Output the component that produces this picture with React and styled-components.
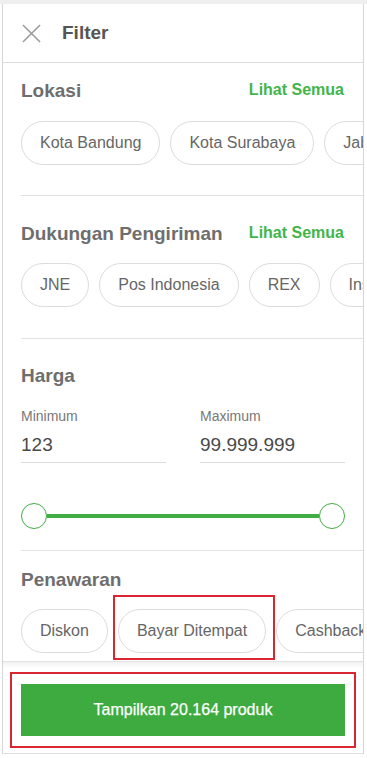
import React from 'react';
import styled, {createGlobalStyle} from 'styled-components';

const GlobalStyle = createGlobalStyle`
    body {
        margin: 0;
        background: #fff;
        font-family: "Liberation Sans", Arial, sans-serif;
    }
`

const lokasi = ['Kota Bandung', 'Kota Surabaya', 'Jabodetabek']
const kurir = ['JNE', 'Pos Indonesia', 'REX', 'Instant Courier']
const penawaran = ['Diskon', 'Bayar Ditempat', 'Cashback']

function App() {
    return (
        <Page>
            <GlobalStyle />
            <Frame>
                <Header>
                    <CloseIcon viewBox="0 0 20 20">
                        <path d="M1 1 L19 19 M19 1 L1 19" />
                    </CloseIcon>
                    <HeaderTitle>Filter</HeaderTitle>
                </Header>

                <Content>
                    <Section top={15.6} bottom={30}>
                        <TitleRow>
                            <Title>Lokasi</Title>
                            <SeeAll>Lihat Semua</SeeAll>
                        </TitleRow>
                        <ChipRow gap={18.4}>
                            {lokasi.map(item => <Chip key={item}>{item}</Chip>)}
                        </ChipRow>
                    </Section>
                    <Divider />

                    <Section top={26} bottom={31}>
                        <TitleRow>
                            <Title>Dukungan Pengiriman</Title>
                            <SeeAll>Lihat Semua</SeeAll>
                        </TitleRow>
                        <ChipRow gap={17}>
                            {kurir.map(item => <Chip key={item}>{item}</Chip>)}
                        </ChipRow>
                    </Section>
                    <Divider />

                    <Section top={25} bottom={21}>
                        <TitleRow>
                            <Title>Harga</Title>
                        </TitleRow>
                        <PriceGrid>
                            <PriceField>
                                <PriceLabel>Minimum</PriceLabel>
                                <PriceValue>123</PriceValue>
                            </PriceField>
                            <PriceField>
                                <PriceLabel>Maximum</PriceLabel>
                                <PriceValue>99.999.999</PriceValue>
                            </PriceField>
                        </PriceGrid>
                        <Slider>
                            <Handle />
                            <Track />
                            <Handle />
                        </Slider>
                    </Section>
                    <Divider />

                    <Section top={17} bottom={0}>
                        <TitleRow>
                            <Title>Penawaran</Title>
                        </TitleRow>
                        <ChipRow gap={17}>
                            {penawaran.map(item => (
                                <Chip key={item}>
                                    {item}
                                    {item === 'Bayar Ditempat' && <Highlight />}
                                </Chip>
                            ))}
                        </ChipRow>
                    </Section>
                </Content>

                <Footer>
                    <FooterMark>
                        <SubmitButton>Tampilkan 20.164 produk</SubmitButton>
                    </FooterMark>
                </Footer>
            </Frame>
        </Page>
    );
}

export default App;

const Page = styled.div`
    border-top: 4px solid #efefef;
    height: 754px;
`

const Frame = styled.div`
    margin-left: 2px;
    width: 362px;
    height: 750px;
    box-sizing: border-box;
    border-left: 1px solid #d6d6d6;
    border-right: 1px solid #d6d6d6;
    border-bottom: 1px solid #e0e0e0;
    background: #fff;
    display: flex;
    flex-direction: column;
    overflow: hidden;
`

const Header = styled.div`
    height: 58px;
    flex-shrink: 0;
    border-bottom: 1px solid #dcdcdc;
    display: flex;
    align-items: center;
    padding-left: 19px;
`

const CloseIcon = styled.svg`
    width: 19px;
    height: 19px;
    fill: none;
    stroke: #9a9a9a;
    stroke-width: 1.6;
    margin-right: 21px;
`

const HeaderTitle = styled.div`
    font-size: 19px;
    font-weight: bold;
    color: #555;
`

const Content = styled.div`
    height: 598px;
    flex-shrink: 0;
    overflow: hidden;
`

const Section = styled.div`
    padding: ${p => p.top}px 0 ${p => p.bottom}px 18px;
`

const TitleRow = styled.div`
    display: flex;
    align-items: center;
    justify-content: space-between;
    padding-right: 19px;
    height: 24px;
`

const Title = styled.div`
    font-size: 19px;
    line-height: 24px;
    font-weight: bold;
    color: #6e6e6e;
`

const SeeAll = styled.div`
    font-size: 16px;
    font-weight: bold;
    color: #42b549;
    margin-top: -1px;
`

const ChipRow = styled.div`
    display: flex;
    gap: 10px;
    margin-top: ${p => p.gap}px;
`

const Chip = styled.div`
    position: relative;
    flex-shrink: 0;
    height: 44px;
    box-sizing: border-box;
    padding: 0 18px;
    border: 1px solid #dcdcdc;
    border-radius: 22px;
    display: flex;
    align-items: center;
    font-size: 16px;
    color: #666;
    white-space: nowrap;
`

const Highlight = styled.div`
    position: absolute;
    top: -15px;
    left: -6px;
    right: -10px;
    bottom: -8px;
    border: 2px solid #d92630;
`

const Divider = styled.div`
    height: 1px;
    margin-left: 18px;
    background: #e2e2e2;
`

const PriceGrid = styled.div`
    display: grid;
    grid-template-columns: 1fr 1fr;
    column-gap: 34px;
    margin-top: 19px;
    padding-right: 18px;
`

const PriceField = styled.div`
    border-bottom: 1px solid #dcdcdc;
    padding-bottom: 5px;
`

const PriceLabel = styled.div`
    font-size: 14px;
    line-height: 18px;
    color: #777;
`

const PriceValue = styled.div`
    margin-top: 7.6px;
    font-size: 19px;
    line-height: 24px;
    color: #4a4a4a;
`

const Slider = styled.div`
    display: flex;
    align-items: center;
    margin-top: 40px;
    padding-right: 18px;
`

const Handle = styled.div`
    width: 26px;
    height: 26px;
    box-sizing: border-box;
    border: 1.5px solid #3fae43;
    border-radius: 50%;
    background: #fff;
    flex-shrink: 0;
`

const Track = styled.div`
    flex: 1;
    height: 4px;
    background: #3fae43;
`

const Footer = styled.div`
    flex: 1;
    border-top: 1px solid #e3e3e3;
    background: linear-gradient(#f1f1f1, #fff 6px);
    padding: 10px 7px 6px;
`

const FooterMark = styled.div`
    border: 2px solid #d92630;
    padding: 10px 9px;
`

const SubmitButton = styled.div`
    height: 52px;
    background: #3dab3f;
    color: #fff;
    font-size: 16px;
    -webkit-text-stroke: 0.25px #fff;
    display: flex;
    align-items: center;
    justify-content: center;
`
